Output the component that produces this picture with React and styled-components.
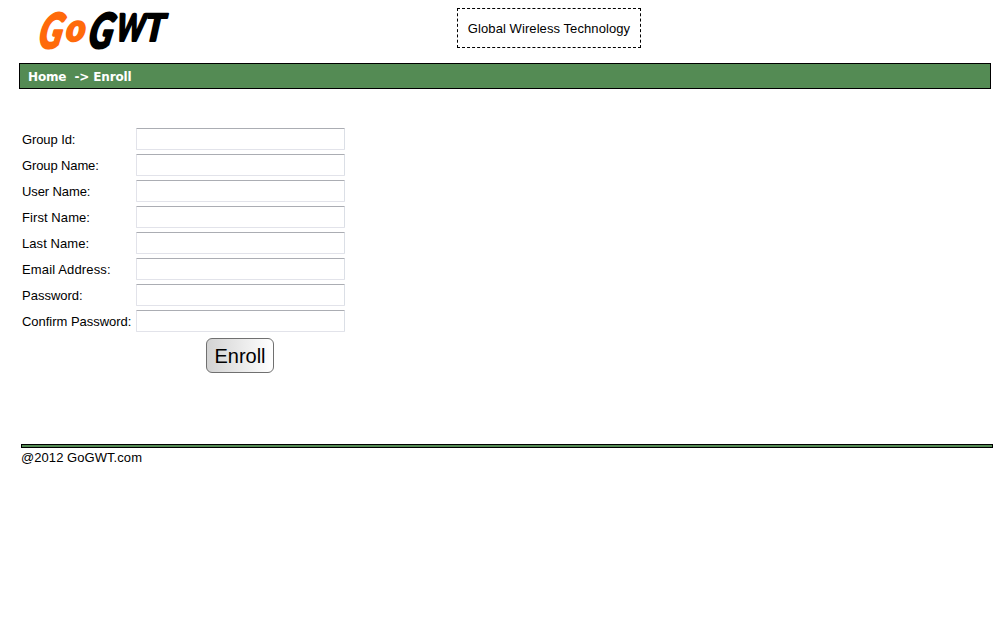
import React from 'react';
import styled, { createGlobalStyle } from 'styled-components';

const GlobalStyle = createGlobalStyle`
  * { box-sizing: border-box; }
  body {
    margin: 0;
    background: #fff;
    color: #000;
    font: 13px/16px "Liberation Sans", Arial, sans-serif;
  }
`;

const Page = styled.div`
  width: 1008px;
  padding: 8px 15px 0 19px;
`;

const Header = styled.header`
  display: grid;
  grid-template-columns: 438px 184px;
  height: 55px;
`;

const Logo = styled.svg`
  display: block;
  width: 150px;
  height: 46px;
  margin-left: 17px;
  overflow: visible;
  font-family: Lato, "Liberation Sans", sans-serif;
  font-size: 20px;
  font-weight: 900;
  font-style: italic;
`;

const LogoLetter = styled.text`
  fill: ${({ $color }) => $color};
  stroke: ${({ $color }) => $color};
  stroke-width: 1px;
  stroke-linejoin: round;
`;

const Tagline = styled.div`
  height: 40px;
  display: flex;
  align-items: center;
  justify-content: center;
  padding-top: 2px;
  border: 1px dashed #000;
  letter-spacing: 0.08px;
  white-space: nowrap;
`;

const NavBar = styled.nav`
  display: flex;
  align-items: center;
  width: 972px;
  height: 26px;
  padding: 1px 0 0 8px;
  border: 1px solid #000;
  background: #548b54;
  color: #fff;
  font: bold 12px/16px "DejaVu Sans", Verdana, sans-serif;
  letter-spacing: -0.14px;
  white-space: pre;
`;

const Form = styled.form`
  display: flex;
  flex-direction: column;
  gap: 4px;
  width: 326px;
  margin: 39px 0 0 3px;
`;

const Row = styled.label`
  display: grid;
  grid-template-columns: 114px 209px;
  align-items: center;
  height: 22px;
  white-space: nowrap;
`;

const Label = styled.span`
  padding-top: 1px;
  letter-spacing: ${({ $spacing }) => $spacing}px;
`;

const Input = styled.input`
  width: 209px;
  height: 22px;
  margin: 0;
  border: 1px solid #e2e3ea;
  border-top-color: #abadb3;
  border-right-color: #dbdfe6;
  border-radius: 1px;
  outline: none;
  background: #fff;
`;

const EnrollButton = styled.button`
  width: 68px;
  height: 35px;
  margin: 2px 0 0 184px;
  padding: 0;
  border: 1px solid #707070;
  border-radius: 6px;
  background: linear-gradient(to right, #d3d3d3, #fff);
  color: #000;
  font: 20px/32px "Liberation Sans", Arial, sans-serif;
`;

const Footer = styled.footer`
  margin: 71px 0 0 2px;
  letter-spacing: 0.06px;
`;

const Rule = styled.div`
  width: 972px;
  height: 4px;
  margin-bottom: 2px;
  border: 1px solid #000;
  background: #548b54;
`;

const fields = [
  { label: 'Group Id:', type: 'text', spacing: -0.1 },
  { label: 'Group Name:', type: 'text', spacing: -0.12 },
  { label: 'User Name:', type: 'text', spacing: -0.1 },
  { label: 'First Name:', type: 'text', spacing: 0.08 },
  { label: 'Last Name:', type: 'text', spacing: 0.08 },
  { label: 'Email Address:', type: 'text', spacing: 0.14 },
  { label: 'Password:', type: 'password', spacing: 0 },
  { label: 'Confirm Password:', type: 'password', spacing: -0.03 },
];

const letters = [
  { char: 'G', color: '#ff6a0a', transform: 'translate(0.8 40) skewX(-12) scale(1.72 2.4)' },
  { char: 'o', color: '#ff6a0a', transform: 'translate(29.5 33) skewX(-5) scale(1.85 1.9)' },
  { char: 'G', color: '#000', transform: 'translate(50.5 40) skewX(-12) scale(1.78 2.4)' },
  { char: 'W', color: '#000', transform: 'translate(79 32.5) skewX(-8) scale(1.46 1.88)' },
  { char: 'T', color: '#000', transform: 'translate(108 32.5) skewX(-6) scale(1.78 1.88)' },
];

export default function App() {
  return (
    <>
      <GlobalStyle />
      <Page>
        <Header>
          <Logo viewBox="0 0 150 46" aria-label="GoGWT">
            {letters.map(({ char, color, transform }, i) => (
              <LogoLetter key={i} $color={color} transform={transform}>{char}</LogoLetter>
            ))}
          </Logo>
          <Tagline>Global Wireless Technology</Tagline>
        </Header>
        <NavBar>{'Home  -> Enroll'}</NavBar>
        <Form onSubmit={(e) => e.preventDefault()}>
          {fields.map(({ label, type, spacing }) => (
            <Row key={label}>
              <Label $spacing={spacing}>{label}</Label>
              <Input type={type} />
            </Row>
          ))}
          <EnrollButton type="submit">Enroll</EnrollButton>
        </Form>
        <Footer>
          <Rule />
          @2012 GoGWT.com
        </Footer>
      </Page>
    </>
  );
}
